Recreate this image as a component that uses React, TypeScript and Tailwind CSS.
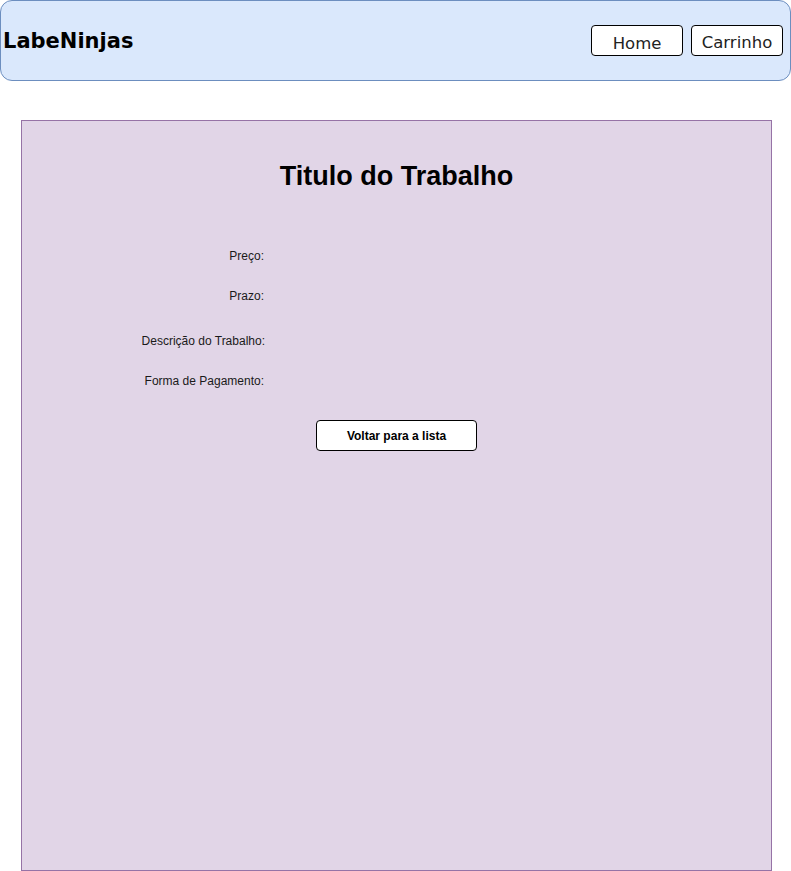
const labels = ['Preço:', 'Prazo:', 'Descrição do Trabalho:', 'Forma de Pagamento:']

function Header() {
  return (
    <header className="flex h-[81px] w-[791px] items-center justify-between rounded-[12px] border border-[#6c8ebf] bg-[#dae8fc] pl-[2px] pr-[7px] font-['DejaVu_Sans',sans-serif]">
      <h1 className="pt-[3px] text-[21px] font-bold text-black">LabeNinjas</h1>
      <nav className="flex gap-[8px]">
        <button className="h-[31px] w-[92px] rounded-[4px] border border-black bg-white pt-[6px] text-[16.5px] leading-[20px] text-[#222]">
          Home
        </button>
        <button className="h-[31px] w-[92px] rounded-[4px] border border-black bg-white pt-[4px] text-[16.5px] leading-[20px] text-[#222]">
          Carrinho
        </button>
      </nav>
    </header>
  )
}

export default function App() {
  return (
    <div className="w-[791px] bg-white">
      <Header />
      <main className="ml-[21px] mt-[39px] h-[751px] w-[751px] border border-[#9673a6] bg-[#e1d5e7] pt-[40px] font-['Liberation_Sans',Arial,sans-serif] text-black">
        <h2 className="text-center text-[27px] font-bold leading-[30px]">Titulo do Trabalho</h2>
        <div className="mt-[58px] flex flex-col">
          <p className="w-[242px] text-right text-[12px] leading-[14px] text-[#1a1a1a]">{labels[0]}</p>
          <p className="mt-[26px] w-[242px] text-right text-[12px] leading-[14px] text-[#1a1a1a]">{labels[1]}</p>
          <p className="mt-[31px] w-[243px] text-right text-[12px] leading-[14px] text-[#1a1a1a]">{labels[2]}</p>
          <p className="mt-[26px] w-[242px] text-right text-[12px] leading-[14px] text-[#1a1a1a]">{labels[3]}</p>
        </div>
        <div className="mt-[32px] flex justify-center">
          <button className="h-[31px] w-[161px] rounded-[4px] border border-black bg-white text-[12px] font-bold">
            Voltar para a lista
          </button>
        </div>
      </main>
    </div>
  )
}
